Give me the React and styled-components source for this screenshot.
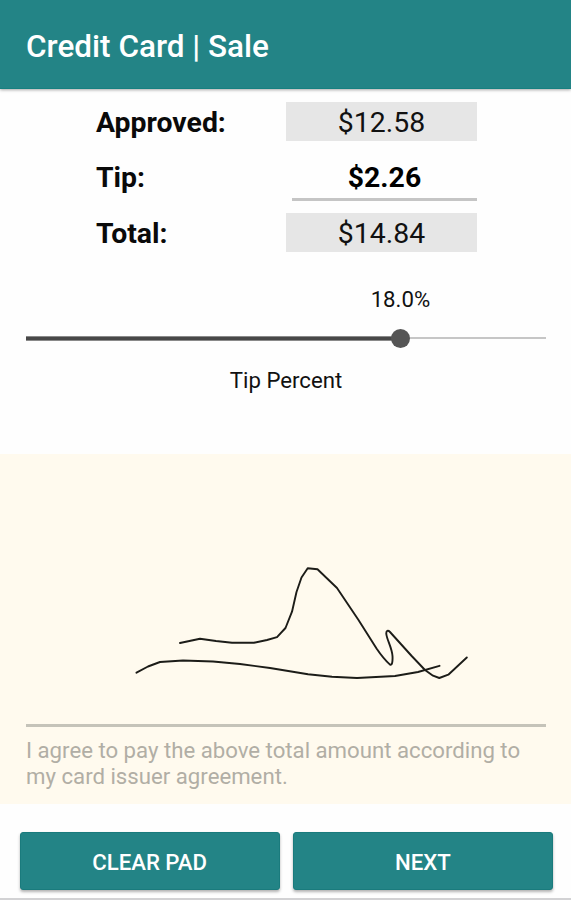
import React from "react";
import styled, { createGlobalStyle } from "styled-components";

const GlobalStyle = createGlobalStyle`
  *, *::before, *::after {
    box-sizing: border-box;
  }

  body {
    margin: 0;
    background: #fefefe;
    font-family: Roboto, "Liberation Sans", sans-serif;
    color: #111;
  }
`;

const Screen = styled.div`
  display: flex;
  flex-direction: column;
  height: 900px;
  overflow: hidden;
  border-bottom: 2px solid #d2d2d4;
`;

const Header = styled.header`
  display: flex;
  align-items: center;
  flex: none;
  height: 89px;
  padding: 5px 26px 0;
  background: #238486;
  border-bottom: 1px solid #168080;
  box-shadow: 0 1px 3px rgba(0, 0, 0, 0.35);
`;

const Title = styled.h1`
  margin: 0;
  color: #fff;
  font-size: 31.5px;
  font-weight: 500;
`;

const Amounts = styled.dl`
  display: grid;
  grid-template-columns: 190px 191px;
  grid-template-rows: 39px 40px 39px;
  row-gap: 16px;
  margin: 0;
  padding: 13px 0 0 96px;
`;

const Label = styled.dt`
  color: #0a0a0a;
  font-size: 28.4px;
  font-weight: 700;
  line-height: 42px;
`;

const Amount = styled.dd`
  margin: 0;
  background: #e6e6e6;
  font-size: 28.4px;
  line-height: 42px;
  text-align: center;
`;

const TipAmount = styled(Amount)`
  height: 44px;
  margin-left: 6px;
  background: none;
  border-bottom: 3px solid #c5c5c5;
  color: #000;
  font-size: 28.4px;
  font-weight: 700;
`;

const TipSlider = styled.section`
  display: flex;
  flex-direction: column;
  height: 202px;
  padding: 34px 25px 0 26px;
  font-size: 22.2px;
  line-height: 26px;
`;

const Percent = styled.output`
  align-self: flex-start;
  width: 80px;
  margin-left: calc(72% - 40px);
  text-align: center;
`;

const Track = styled.div`
  display: flex;
  align-items: center;
  height: 20px;
  margin-top: 16px;
`;

const Filled = styled.div`
  height: 5px;
  background: #484848;
  border: solid #8a8a8a;
  border-width: 1px 0;
`;

const Thumb = styled.div`
  flex: none;
  width: 19px;
  height: 19px;
  margin: 0 -10px 0 -9px;
  border-radius: 50%;
  background: #555;
  z-index: 1;
`;

const Rest = styled.div`
  flex: 1;
  height: 2px;
  background: #c6c6c6;
`;

const Caption = styled.div`
  margin-top: 19px;
  text-align: center;
`;

const Pad = styled.section`
  flex: none;
  height: 350px;
  background: #fffaee;
`;

const Signature = styled.svg`
  display: block;
  width: 571px;
  height: 270px;
  fill: none;
  stroke: #1c1c18;
  stroke-width: 1.9;
  stroke-linecap: round;
  stroke-linejoin: round;
`;

const Agreement = styled.p`
  margin: 0 25px 0 26px;
  padding-top: 10px;
  border-top: 3px solid #c5c3b9;
  color: #b1aea5;
  font-size: 22.2px;
  line-height: 26px;
`;

const Actions = styled.footer`
  display: flex;
  gap: 13px;
  padding: 28px 18px 0 19.5px;
`;

const Button = styled.button`
  flex: 1;
  height: 58px;
  padding: 2px 0 0;
  border: 1px solid #1a7b7d;
  border-radius: 3px;
  background: #238486;
  box-shadow: 0 2px 3px rgba(0, 0, 0, 0.3);
  color: #fff;
  font-family: inherit;
  font-size: 22.2px;
  font-weight: 500;
`;

const MAX_PERCENT = 25;

const App = () => {
  const percent = 18;
  return (
    <Screen>
      <GlobalStyle />
      <Header>
        <Title>Credit Card | Sale</Title>
      </Header>
      <Amounts>
        <Label>Approved:</Label>
        <Amount>$12.58</Amount>
        <Label>Tip:</Label>
        <TipAmount>$2.26</TipAmount>
        <Label>Total:</Label>
        <Amount>$14.84</Amount>
      </Amounts>
      <TipSlider>
        <Percent>{percent.toFixed(1)}%</Percent>
        <Track>
          <Filled style={{ width: `${(percent / MAX_PERCENT) * 100}%` }} />
          <Thumb />
          <Rest />
        </Track>
        <Caption>Tip Percent</Caption>
      </TipSlider>
      <Pad>
        <Signature viewBox="0 454 571 270">
          <path d="M180 643L200 638.7L216 641L232 642.7H254L267 640L277 637.2L285.5 628L292 611.7L296.5 592L301.5 577.5L307.7 568.2L317.5 569.3L337 588L358.5 620L376.7 648.7C381 655 386 661 390 664.6C392 665.5 392.8 662 392.5 656C392 648 387 640 386.3 634C386 630.5 388 630 390 632L411.7 656L425 670L433 675.7L439.3 678L448.3 674.7L466.8 657.5" />
          <path d="M136.5 672.7L148 666.5L160 662L183 660.5L213 661.5L240 664L270 668L308 674.3L332 676.7L357 678L395 676L418 672L439.5 665.8" />
        </Signature>
        <Agreement>
          I agree to pay the above total amount according to my card issuer
          agreement.
        </Agreement>
      </Pad>
      <Actions>
        <Button>CLEAR PAD</Button>
        <Button>NEXT</Button>
      </Actions>
    </Screen>
  );
};

export default App;
